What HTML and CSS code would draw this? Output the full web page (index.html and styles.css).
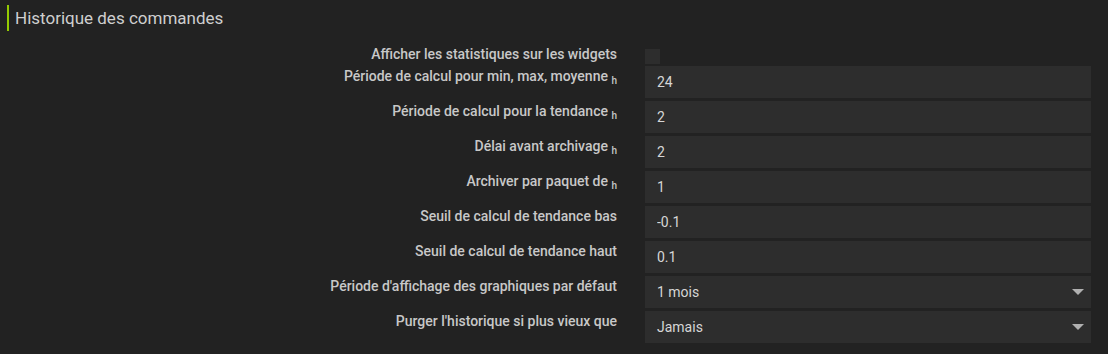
FILE: index.html
```html
<!DOCTYPE html>
<html lang="fr">
<head>
    <meta charset="UTF-8">
    <title>Configuration - Historique</title>
    <link rel="stylesheet" href="styles.css">
</head>
<body>
    <fieldset class="panel">
        <legend class="panel-title">Historique des commandes</legend>

        <div class="form-row form-row-check">
            <label class="control-label">Afficher les statistiques sur les widgets</label>
            <div class="control"><input type="checkbox" class="checkbox"></div>
        </div>
        <div class="form-row">
            <label class="control-label">Période de calcul pour min, max, moyenne <sub>h</sub></label>
            <div class="control"><input type="text" class="input" value="24"></div>
        </div>
        <div class="form-row">
            <label class="control-label">Période de calcul pour la tendance <sub>h</sub></label>
            <div class="control"><input type="text" class="input" value="2"></div>
        </div>
        <div class="form-row">
            <label class="control-label">Délai avant archivage <sub>h</sub></label>
            <div class="control"><input type="text" class="input" value="2"></div>
        </div>
        <div class="form-row">
            <label class="control-label">Archiver par paquet de <sub>h</sub></label>
            <div class="control"><input type="text" class="input" value="1"></div>
        </div>
        <div class="form-row">
            <label class="control-label">Seuil de calcul de tendance bas</label>
            <div class="control"><input type="text" class="input" value="-0.1"></div>
        </div>
        <div class="form-row">
            <label class="control-label">Seuil de calcul de tendance haut</label>
            <div class="control"><input type="text" class="input" value="0.1"></div>
        </div>
        <div class="form-row">
            <label class="control-label">Période d'affichage des graphiques par défaut</label>
            <div class="control">
                <div class="select">
                    <span>1 mois</span>
                    <span class="caret"></span>
                </div>
            </div>
        </div>
        <div class="form-row">
            <label class="control-label">Purger l'historique si plus vieux que</label>
            <div class="control">
                <div class="select">
                    <span>Jamais</span>
                    <span class="caret"></span>
                </div>
            </div>
        </div>
    </fieldset>
</body>
</html>
```

FILE: styles.css
```css
:root {
    --bg-color: #222222;
    --input-bg: #2d2d2d;
    --text-color: #c8c8c8;
    --input-text: #d6d6d6;
    --accent: #94ca02;
}

body {
    margin: 0;
    padding: 5px 17px 0 7px;
    background-color: var(--bg-color);
    color: var(--text-color);
    font-family: Roboto, 'Liberation Sans', Arial, sans-serif;
    font-size: 13px;
}

.panel {
    margin: 0;
    padding: 0;
    border: none;
}

.panel-title {
    display: block;
    float: left;
    width: 100%;
    box-sizing: border-box;
    padding: 0 0 0 6px;
    margin: 0 0 15px 0;
    border-left: 2px solid var(--accent);
    font-size: 17px;
    line-height: 26px;
    color: #cfcfcf;
}

.form-row {
    clear: both;
    display: grid;
    grid-template-columns: 610px 1fr;
    column-gap: 28px;
    margin-bottom: 3px;
}

.form-row-check {
    margin-bottom: 0;
}

.control-label {
    text-align: right;
    font-size: 14px;
    font-weight: 500;
    padding-top: 2px;
    line-height: 16px;
}

.control-label sub {
    font-size: 10px;
    line-height: 0;
    vertical-align: -3px;
}

.form-row-check .control-label {
    padding-top: 0;
}

.checkbox {
    appearance: none;
    margin: 3px 0 2px 0;
    width: 15px;
    height: 15px;
    background: var(--input-bg);
    border: none;
    display: block;
}

.input,
.select {
    display: flex;
    align-items: center;
    width: 100%;
    height: 32px;
    box-sizing: border-box;
    padding: 0 12px;
    background: var(--input-bg);
    border: none;
    color: var(--input-text);
    font-family: inherit;
    font-size: 14px;
    outline: none;
}

.select {
    justify-content: space-between;
    padding-right: 7px;
}

.caret {
    width: 0;
    height: 0;
    border-left: 6px solid transparent;
    border-right: 6px solid transparent;
    border-top: 6px solid #b0b0b0;
}
```
